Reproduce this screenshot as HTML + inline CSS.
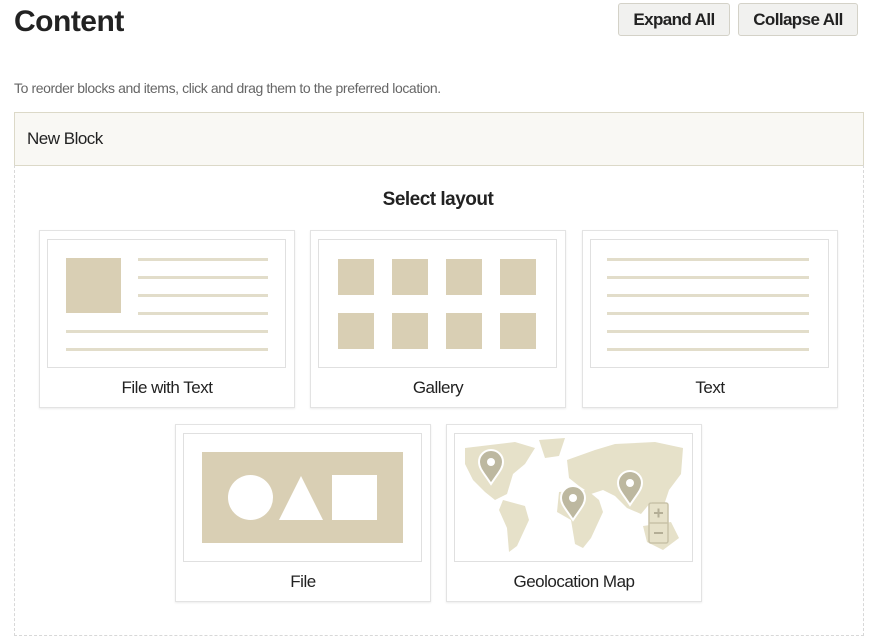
<!DOCTYPE html><html><head><style>
body{margin:0;width:876px;height:642px;background:#fff;font-family:"Liberation Sans",sans-serif;color:#222;position:relative;overflow:hidden}
.a{position:absolute}
h1{position:absolute;left:14px;top:5px;margin:0;font-size:30px;font-weight:bold;letter-spacing:-0.5px}
.btn{position:absolute;top:3px;height:31px;border:1px solid #d4d2c8;border-radius:3px;background:#f1f1ef;font-size:17px;font-weight:bold;line-height:31px;text-align:center;letter-spacing:-0.6px}
.card{position:absolute;width:254px;height:176px;border:1px solid #e3e3e3;box-shadow:0 1px 2px rgba(0,0,0,.08);background:#fff}
.pv{position:absolute;left:7px;top:8px;width:237px;height:127px;border:1px solid #e0e0e0}
.lbl{position:absolute;left:0;right:0;top:147px;text-align:center;font-size:17px;letter-spacing:-0.5px}
.sq{position:absolute;background:#d9cfb4}
.ln{position:absolute;height:3px;background:#e2ddca}
</style></head><body>
<h1>Content</h1>
<div class="btn" style="left:618px;width:110px">Expand All</div>
<div class="btn" style="left:738px;width:118px">Collapse All</div>
<div class="a" style="left:14px;top:80px;font-size:14px;color:#666;letter-spacing:-0.4px">To reorder blocks and items, click and drag them to the preferred location.</div>
<div class="a" style="left:14px;top:112px;width:848px;height:52px;background:#f9f8f4;border:1px solid #dcd9c8"></div>
<div class="a" style="left:27px;top:129px;font-size:17px;letter-spacing:-0.5px">New Block</div>
<div class="a" style="left:14px;top:165px;width:848px;height:470px;border:1px dashed #d8d8d8;border-top:none"></div>
<div class="a" style="left:0;width:876px;top:189px;text-align:center;font-size:19px;font-weight:bold;letter-spacing:-0.5px">Select layout</div>

<div class="card" style="left:39px;top:230px"><div class="pv">
<div class="sq" style="left:18px;top:18px;width:55px;height:55px"></div>
<div class="ln" style="left:90px;top:18px;width:130px"></div>
<div class="ln" style="left:90px;top:36px;width:130px"></div>
<div class="ln" style="left:90px;top:54px;width:130px"></div>
<div class="ln" style="left:90px;top:72px;width:130px"></div>
<div class="ln" style="left:18px;top:90px;width:202px"></div>
<div class="ln" style="left:18px;top:108px;width:202px"></div>
</div><div class="lbl">File with Text</div></div>

<div class="card" style="left:310px;top:230px"><div class="pv">
<div class="sq" style="left:19px;top:19px;width:36px;height:36px"></div>
<div class="sq" style="left:73px;top:19px;width:36px;height:36px"></div>
<div class="sq" style="left:127px;top:19px;width:36px;height:36px"></div>
<div class="sq" style="left:181px;top:19px;width:36px;height:36px"></div>
<div class="sq" style="left:19px;top:73px;width:36px;height:36px"></div>
<div class="sq" style="left:73px;top:73px;width:36px;height:36px"></div>
<div class="sq" style="left:127px;top:73px;width:36px;height:36px"></div>
<div class="sq" style="left:181px;top:73px;width:36px;height:36px"></div>
</div><div class="lbl">Gallery</div></div>

<div class="card" style="left:582px;top:230px"><div class="pv">
<div class="ln" style="left:16px;top:18px;width:202px"></div>
<div class="ln" style="left:16px;top:36px;width:202px"></div>
<div class="ln" style="left:16px;top:54px;width:202px"></div>
<div class="ln" style="left:16px;top:72px;width:202px"></div>
<div class="ln" style="left:16px;top:90px;width:202px"></div>
<div class="ln" style="left:16px;top:108px;width:202px"></div>
</div><div class="lbl">Text</div></div>

<div class="card" style="left:175px;top:424px"><div class="pv">
<div class="sq" style="left:18px;top:18px;width:201px;height:91px"></div>
<div class="a" style="left:44px;top:41px;width:45px;height:45px;border-radius:50%;background:#fff"></div>
<svg class="a" style="left:94px;top:41px" width="46" height="46"><polygon points="23,1 45,45 1,45" fill="#fff"/></svg>
<div class="a" style="left:148px;top:41px;width:45px;height:45px;background:#fff"></div>
</div><div class="lbl">File</div></div>

<div class="card" style="left:446px;top:424px"><div class="pv">
<svg class="a" style="left:0;top:0" width="237" height="127" viewBox="0 0 237 127">
<g fill="#e6e1c9">
<path d="M10 14 L60 8 L80 14 L70 30 L58 40 L52 60 L40 66 L30 58 L18 46 L10 30Z"/>
<path d="M84 6 L110 4 L104 22 L90 24Z"/>
<path d="M48 66 L70 72 L74 86 L62 112 L54 118 L52 94 L44 76Z"/>
<path d="M112 26 L140 16 L160 10 L200 8 L228 14 L226 40 L214 56 L208 74 L196 68 L186 80 L172 74 L160 62 L148 56 L136 60 L124 52 L114 44Z"/>
<path d="M104 58 L132 56 L144 66 L148 78 L136 104 L128 114 L120 110 L116 86 L102 78Z"/>
<path d="M188 92 L216 88 L224 104 L208 116 L192 108Z"/>
</g>
<g fill="#bdb8a0" stroke="#fff" stroke-width="2">
<path d="M36 50 C28 38 24 34 24 28 A12 12 0 0 1 48 28 C48 34 44 38 36 50Z"/>
<path d="M118 86 C110 74 106 70 106 64 A12 12 0 0 1 130 64 C130 70 126 74 118 86Z"/>
<path d="M175 71 C167 59 163 55 163 49 A12 12 0 0 1 187 49 C187 55 183 59 175 71Z"/>
</g>
<g fill="#fff"><circle cx="36" cy="28" r="4"/><circle cx="118" cy="64" r="4"/><circle cx="175" cy="49" r="4"/></g>
<rect x="194" y="69" width="19" height="40" rx="2" fill="#e6e1c9" stroke="#c8c2a8" stroke-width="1.5"/>
<line x1="194" y1="89" x2="213" y2="89" stroke="#c8c2a8" stroke-width="1.5"/>
<path d="M199 79h9M203.5 74.5v9M199 99h9" stroke="#b4ae96" stroke-width="2"/>
</svg>
</div><div class="lbl">Geolocation Map</div></div>
</body></html>
